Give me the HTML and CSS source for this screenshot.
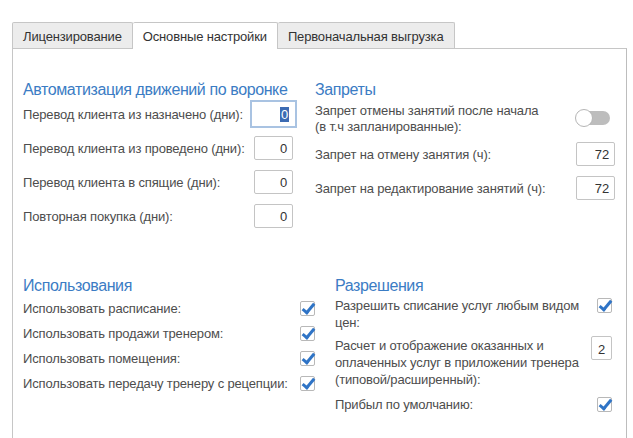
FILE: index.html
```html
<!DOCTYPE html>
<html lang="ru">
<head>
    <meta charset="UTF-8">
    <title>Настройки</title>
    <link rel="stylesheet" href="styles.css">
</head>
<body>
    <div class="tabs">
        <div class="tab">Лицензирование</div>
        <div class="tab active">Основные настройки</div>
        <div class="tab">Первоначальная выгрузка</div>
    </div>

    <div class="panel">
        <div class="row top">
            <div class="group funnel">
                <h2>Автоматизация движений по воронке</h2>
                <div class="field first">
                    <span>Перевод клиента из назначено (дни):</span>
                    <div class="num focused"><span class="sel">0</span></div>
                </div>
                <div class="field">
                    <span>Перевод клиента из проведено (дни):</span>
                    <div class="num">0</div>
                </div>
                <div class="field">
                    <span>Перевод клиента в спящие (дни):</span>
                    <div class="num">0</div>
                </div>
                <div class="field">
                    <span>Повторная покупка (дни):</span>
                    <div class="num">0</div>
                </div>
            </div>

            <div class="group bans">
                <h2>Запреты</h2>
                <div class="field wrap">
                    <span>Запрет отмены занятий после начала<br>(в т.ч запланированные):</span>
                    <div class="toggle"><div class="knob"></div></div>
                </div>
                <div class="field">
                    <span>Запрет на отмену занятия (ч):</span>
                    <div class="num">72</div>
                </div>
                <div class="field">
                    <span>Запрет на редактирование занятий (ч):</span>
                    <div class="num">72</div>
                </div>
            </div>
        </div>

        <div class="row bottom">
            <div class="group uses">
                <h2>Использования</h2>
                <div class="check-row"><span>Использовать расписание:</span><div class="check"></div></div>
                <div class="check-row"><span>Использовать продажи тренером:</span><div class="check"></div></div>
                <div class="check-row"><span>Использовать помещения:</span><div class="check"></div></div>
                <div class="check-row"><span>Использовать передачу тренеру с рецепции:</span><div class="check"></div></div>
            </div>

            <div class="group perms">
                <h2>Разрешения</h2>
                <div class="check-row multi">
                    <span>Разрешить списание услуг любым видом цен:</span>
                    <div class="check"></div>
                </div>
                <div class="check-row multi">
                    <span>Расчет и отображение оказанных и оплаченных услуг в приложении тренера (типовой/расширенный):</span>
                    <div class="num small">2</div>
                </div>
                <div class="check-row">
                    <span>Прибыл по умолчанию:</span>
                    <div class="check"></div>
                </div>
            </div>
        </div>
    </div>
</body>
</html>
```

FILE: styles.css
```css
body {
    margin: 0;
    padding: 22px 0 0 12px;
    font-family: "Liberation Sans", Arial, sans-serif;
    font-size: 13px;
    letter-spacing: -0.15px;
    color: #4d4d4d;
    background: #fff;
    overflow: hidden;
}
.tabs {
    display: flex;
    height: 26px;
}
.tab {
    box-sizing: border-box;
    height: 26px;
    padding: 6px 10px 0 10px;
    background: #ececec;
    border: 1px solid #c6c6c6;
    border-bottom: none;
    border-radius: 2px 2px 0 0;
    color: #333;
}
.tab + .tab {
    border-left: none;
}
.tab.active {
    background: #fff;
    height: 27px;
    position: relative;
    z-index: 1;
}
.panel {
    box-sizing: border-box;
    width: 615px;
    height: 400px;
    border: 1px solid #c6c6c6;
    border-right-color: #bdbdbd;
    padding: 0 0 0 10px;
}
.row {
    display: flex;
}
.row.top {
    padding-top: 31px;
    height: 193px;
}
.group h2 {
    margin: 0;
    font-size: 16px;
    font-weight: normal;
    letter-spacing: -0.4px;
    white-space: nowrap;
    color: #3b7cc4;
    line-height: 19px;
}
.funnel {
    width: 274px;
}
.bans {
    width: 300px;
    margin-left: 18px;
}
.field {
    display: flex;
    align-items: center;
    justify-content: space-between;
    height: 34px;
}
.funnel .field.first {
    margin-top: -2px;
}
.funnel .num {
    margin-right: 4px;
}
.field.wrap {
    height: 38px;
    line-height: 16px;
    align-items: flex-start;
    padding-top: 4px;
    box-sizing: border-box;
}
.num {
    box-sizing: border-box;
    width: 39px;
    height: 24px;
    border: 1px solid #c4c4c4;
    border-radius: 2px;
    text-align: right;
    padding: 4px 5px 0 0;
    color: #333;
}
.funnel .num.focused {
    width: 47px;
    height: 28px;
    margin-right: 0;
    border: 2px solid #a9c3e2;
    border-radius: 0;
    padding: 5px 6px 0 0;
}
.sel {
    background: #3c6bb3;
    color: #fff;
    padding: 0 1px;
}
.num.small {
    width: 21px;
    padding: 4px 0 0 0;
    text-align: center;
}
.toggle {
    position: relative;
    width: 34px;
    height: 14px;
    margin-top: 8px;
    margin-right: 5px;
    background: #bdbdbd;
    border-radius: 8px;
}
.knob {
    position: absolute;
    left: -1px;
    top: -2px;
    width: 16px;
    height: 16px;
    border: 1px solid #b5b5b5;
    border-radius: 50%;
    background: #fff;
}
.row.bottom {
    padding-top: 3px;
}
.uses {
    width: 292px;
}
.perms {
    width: 277px;
    margin-left: 20px;
}
.check-row {
    display: flex;
    justify-content: space-between;
    align-items: center;
    min-height: 25px;
}
.uses .check-row {
    height: 25px;
}
.uses h2 {
    margin-bottom: 1px;
}
.check-row.multi {
    align-items: flex-start;
    line-height: 17px;
    padding: 2px 0 4px 0;
}
.check-row.multi span {
    width: 258px;
}
.perms .check-row.multi .check {
    margin-top: 1px;
}
.perms .check-row.multi .num {
    margin-top: -1px;
}
.check {
    position: relative;
    box-sizing: border-box;
    width: 15px;
    height: 15px;
    border: 1px solid #b8b8b8;
    border-radius: 2px;
    background: #fff;
}
.check::after {
    content: "";
    position: absolute;
    left: 4px;
    top: -1px;
    width: 4px;
    height: 10px;
    border: solid #2f74c6;
    border-width: 0 3px 3px 0;
    transform: rotate(40deg);
}
```
